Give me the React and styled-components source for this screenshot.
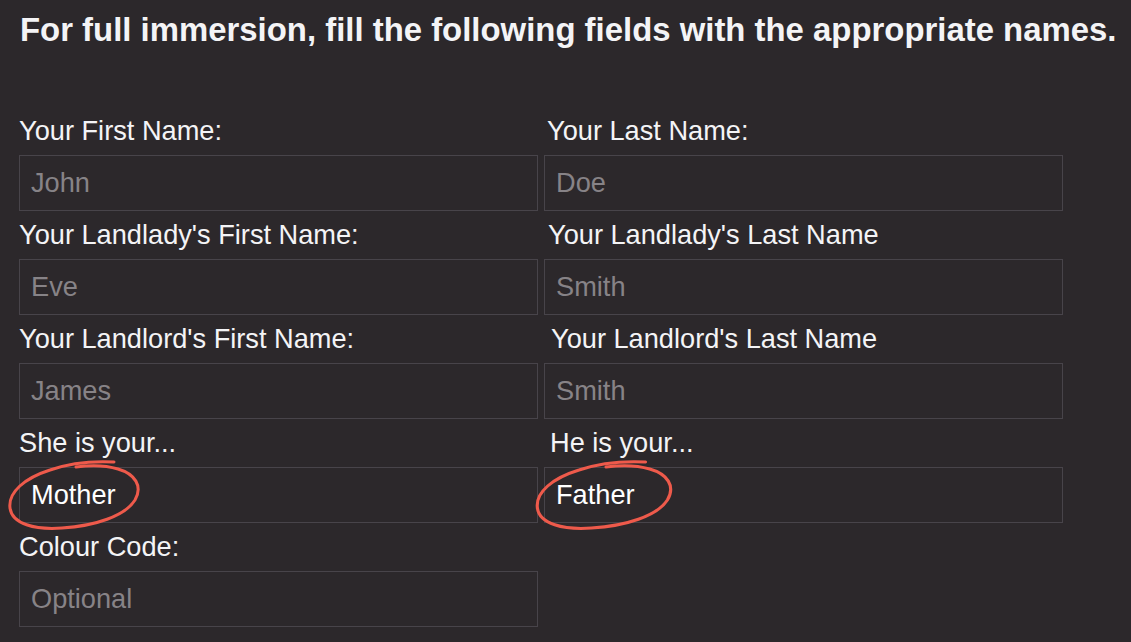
import React from "react";
import styled, { createGlobalStyle } from "styled-components";

const Global = createGlobalStyle`
  html, body { margin: 0; padding: 0; background: #2c282b; }
  body { font-family: "Liberation Sans", Arial, sans-serif; }
`;

const Page = styled.div`
  width: 1131px;
  height: 642px;
  overflow: hidden;
  box-sizing: border-box;
  padding: 14px 0 0 20px;
  background: #2c282b;
  color: #ffffff;
`;

const Heading = styled.h1`
  margin: 0 0 61px 0;
  font-size: 32.9px;
  line-height: 32px;
  font-weight: 700;
  color: #f4f4f6;
  white-space: nowrap;
`;

const Grid = styled.div`
  display: grid;
  grid-template-columns: 519px 519px;
  column-gap: 6px;
  margin-left: -1px;
`;

const Field = styled.div`
  display: flex;
  flex-direction: column;
`;

const Label = styled.label`
  display: block;
  box-sizing: border-box;
  height: 48px;
  line-height: 47px;
  font-size: 27.2px;
  color: #f4f4f6;
  padding-left: ${(p) => p.$indent || 0}px;
  white-space: nowrap;
`;

const InputWrap = styled.div`
  position: relative;
`;

const Input = styled.input`
  display: block;
  box-sizing: border-box;
  width: 100%;
  height: 56px;
  margin: 0;
  padding: 0 11px;
  border: 1px solid #48444a;
  border-radius: 0;
  background: #2c282b;
  color: #ffffff;
  font-family: "Liberation Sans", Arial, sans-serif;
  font-size: 27.2px;
  outline: none;
  &::placeholder {
    color: #878387;
    opacity: 1;
  }
`;

const Circle = styled.svg`
  position: absolute;
  left: ${(p) => p.$left}px;
  top: -17px;
  width: 160px;
  height: 90px;
  pointer-events: none;
  overflow: visible;
`;

const Scribble = ({ left, sx = 1 }) => (
  <Circle $left={left} viewBox="0 0 160 90">
    <g transform={`scale(${sx} 1)`}>
      <path
        d="M114,12 C95,11 70,13 50,20 C25,28 8,42 10,58 C12,74 35,80 62,78 C95,76 125,66 135,50 C143,36 135,24 118,19 C105,15 90,15 76,17"
        fill="none"
        stroke="#ee5a4b"
        strokeWidth="3"
        strokeLinecap="round"
        strokeLinejoin="round"
      />
    </g>
  </Circle>
);

const fields = [
  { label: "Your First Name:", ph: "John" },
  { label: "Your Last Name:", ph: "Doe", indent: 3 },
  { label: "Your Landlady's First Name:", ph: "Eve" },
  { label: "Your Landlady's Last Name", ph: "Smith", indent: 4 },
  { label: "Your Landlord's First Name:", ph: "James" },
  { label: "Your Landlord's Last Name", ph: "Smith", indent: 7 },
  { label: "She is your...", value: "Mother", circle: -19 },
  { label: "He is your...", value: "Father", indent: 6, circle: -17, sx: 1.04 },
  { label: "Colour Code:", ph: "Optional" },
];

export default function App() {
  return (
    <>
      <Global />
      <Page>
        <Heading>For full immersion, fill the following fields with the appropriate names.</Heading>
        <Grid>
          {fields.map((f, i) => (
            <Field key={i}>
              <Label $indent={f.indent}>{f.label}</Label>
              <InputWrap>
                <Input
                  type="text"
                  placeholder={f.ph}
                  defaultValue={f.value}
                />
                {f.circle !== undefined && <Scribble left={f.circle} sx={f.sx} />}
              </InputWrap>
            </Field>
          ))}
        </Grid>
      </Page>
    </>
  );
}
